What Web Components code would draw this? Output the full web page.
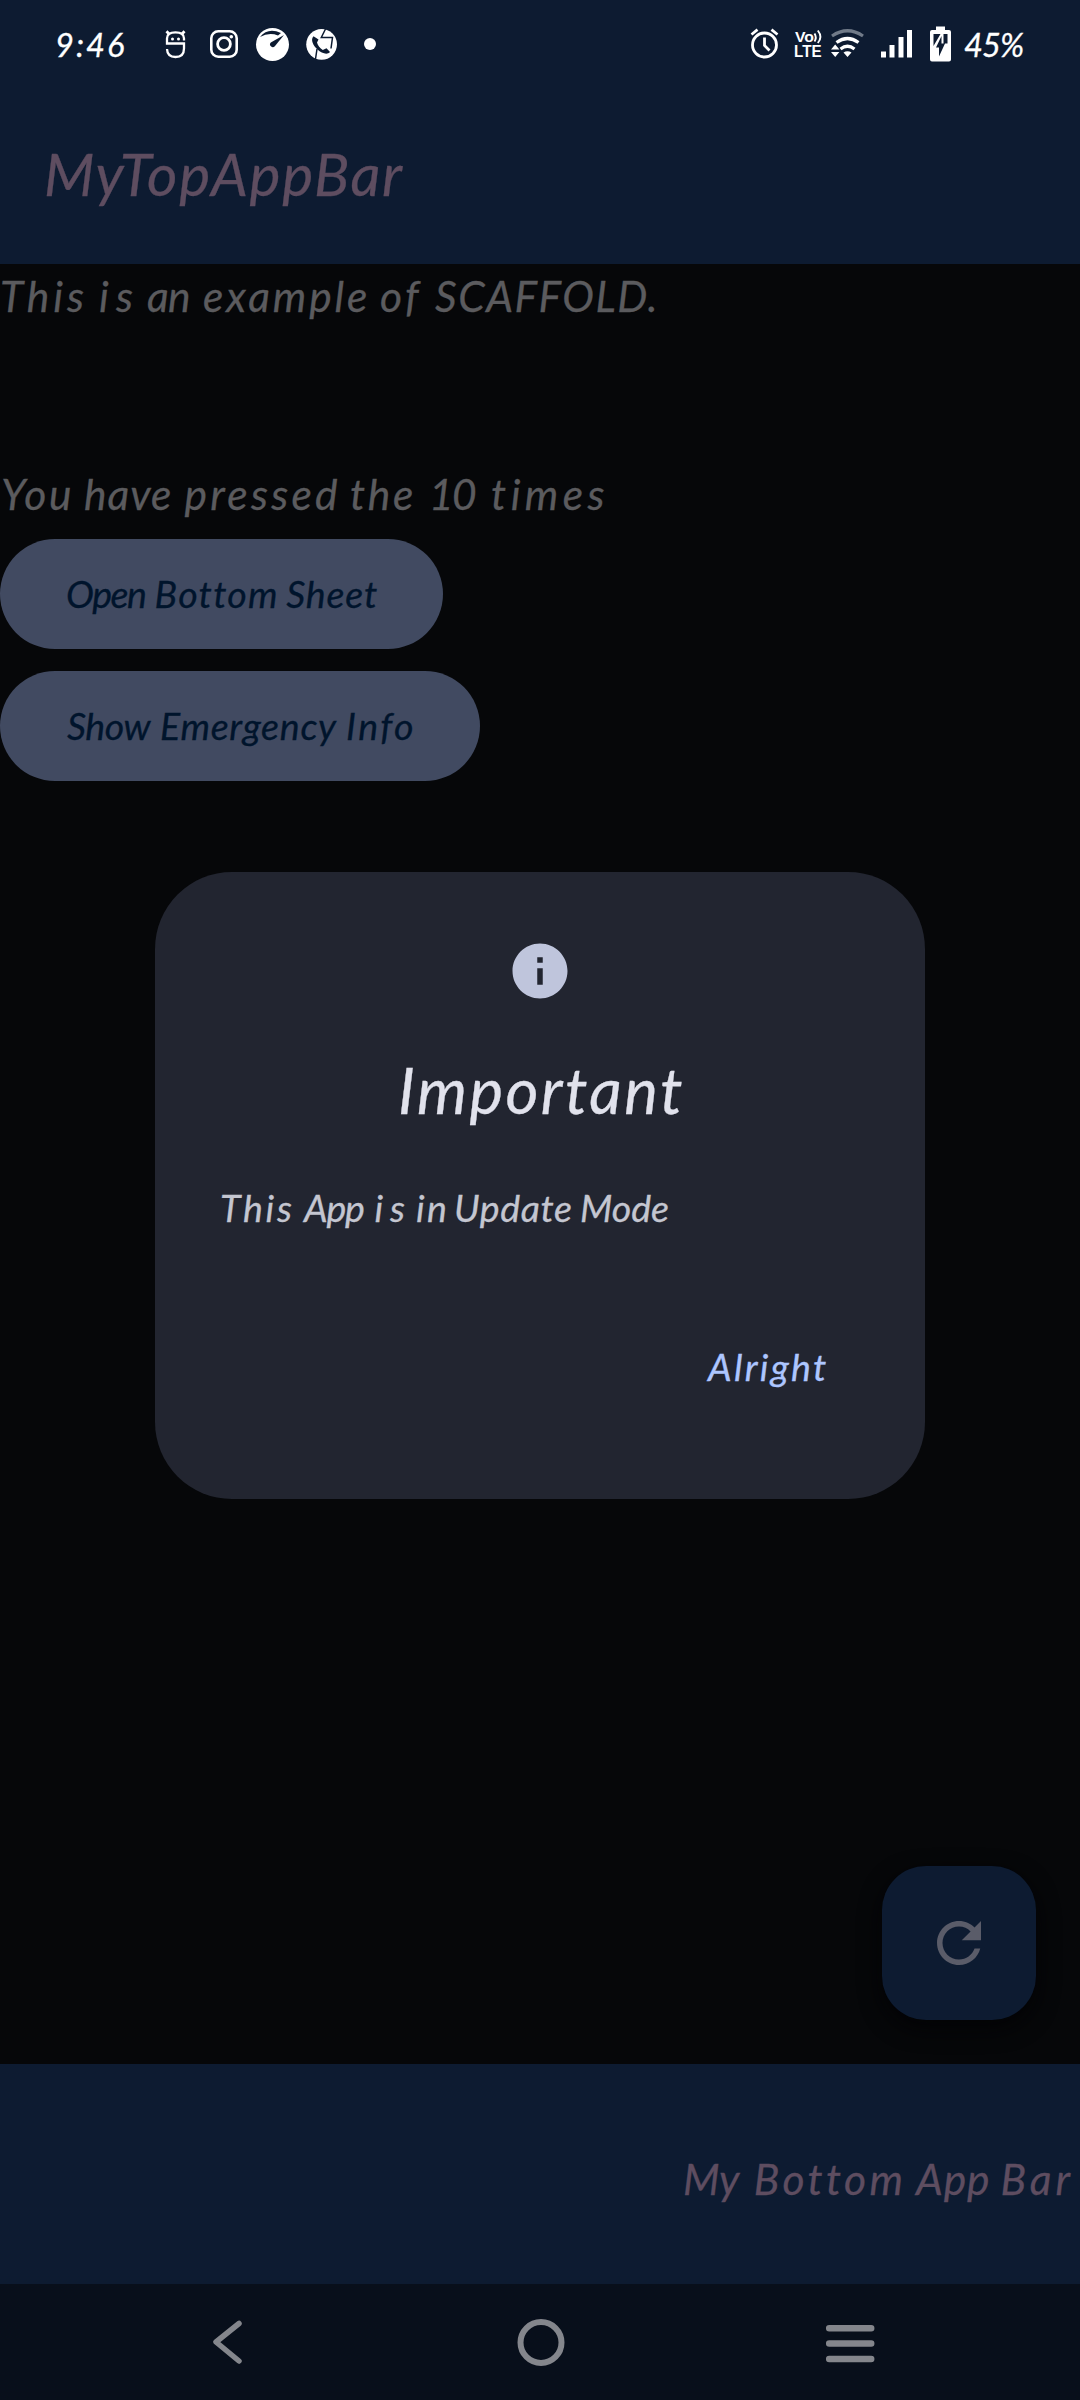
<!DOCTYPE html>
<html lang="en">
<head>
<meta charset="utf-8">
<title>Scaffold</title>
<style>
html,body{margin:0;padding:0;background:#060709}
body{font-family:Lato,"Open Sans",sans-serif;font-style:italic}
</style>
</head>
<body>
<phone-screen></phone-screen>
<script>
// One line of text. `words` lists the start-end pixels of each word's ink;
// letter spacing and word gaps are derived from the measured glyphs.
class FitLabel extends HTMLElement{
  connectedCallback(){
    if(this.shadowRoot)return;
    const words=this.textContent.trim().split(' '),size=+this.getAttribute('size');
    const spans=this.getAttribute('words').split(' ').map(p=>p.split('-').map(Number));
    const c=document.createElement('canvas').getContext('2d');
    c.font=`italic 400 ${size}px Lato`;
    const gap=c.measureText(' ').width,x0=spans[0][0],w=spans[spans.length-1][1]-x0;
    let pen=0;
    this.innerHTML=words.map((t,i)=>{
      const m=c.measureText(t),[s,e]=spans[i];
      const ls=t.length>1?(e-s-m.actualBoundingBoxLeft-m.actualBoundingBoxRight)/(t.length-1):0;
      const origin=s-x0+m.actualBoundingBoxLeft,ml=origin-pen-(i?gap:0);
      pen=origin+m.width+ls*t.length;
      return `<span style="margin-left:${ml.toFixed(2)}px;letter-spacing:${ls.toFixed(3)}px">${t}</span>`;
    }).join(' ');
    this.attachShadow({mode:'open'}).innerHTML=`<style>
      :host{display:block;flex:none;width:${w}px;height:${size*1.2}px;line-height:${size*1.2}px;font-size:${size}px;white-space:pre;font-variant-ligatures:none;-webkit-text-stroke:.3px currentColor}
    </style><slot></slot>`;
  }
}
customElements.define('fit-label',FitLabel);

const define=(name,html)=>{
  const t=document.createElement('template');t.innerHTML=html;
  customElements.define(name,class extends HTMLElement{
    constructor(){super();this.attachShadow({mode:'open'}).append(t.content.cloneNode(true));}
  });
};

define('status-bar',`<style>
:host{display:flex;height:84px;box-sizing:border-box;justify-content:space-between;padding:0 56px 0 57px;color:#fff;background:#0d1b31}
div{display:flex}
fit-label{margin-top:25px}
svg{display:block}
</style>
<div><fit-label size="32.5" words="0-67">9:46</fit-label>
<svg width="270" height="84" viewBox="124 0 270 84" fill="none" stroke="#fff">
  <path d="M184 40.500V38.500Q184 32.300 175.500 32.300T167 38.500V43.500H184V48.500Q184 57 175.500 57Q167.300 57 167 49" stroke-width="2.300"/>
  <path d="M166.500 31.300L169.500 34.500M184.500 31.300L181.500 34.500" stroke-width="2.800"/>
  <circle cx="172.500" cy="39" r="1.500" fill="#fff" stroke="none"/><circle cx="178.500" cy="39" r="1.500" fill="#fff" stroke="none"/>
  <rect x="211.300" y="31.300" width="25.400" height="25.400" rx="7" stroke-width="2.600"/>
  <circle cx="224" cy="44" r="6.400" stroke-width="2.800"/><circle cx="231.300" cy="36.800" r="1.800" fill="#fff" stroke="none"/>
  <circle cx="272.500" cy="44.500" r="16.500" fill="#fff" stroke="none"/>
  <path d="M260 37Q268 27 281 33L278 35.500Q269 32 260 37Z" fill="#0d1b31" stroke="none"/>
  <path d="M284 35L274.800 46.200A2.700 2.700 0 0 1 270.800 42.500Z" fill="#0d1b31" stroke="none"/>
  <circle cx="321.600" cy="44.300" r="15.400" fill="#fff" stroke="none"/>
  <path d="M325.500 29L321.300 37.500H332.500L331 48.500M317 49L315.500 59" stroke="#0d1b31" stroke-width="1.500"/>
  <path d="M313.500 36.200C310 39.500 313.500 46 317.500 49.500C321.500 53 327 55.500 330 52L326.500 48.200L322.800 50C320 48.500 317.800 45.500 317 42.500L318.500 39.500Z" fill="#0d1b31" stroke="none"/>
  <circle cx="370" cy="44" r="6" fill="#fff" stroke="none"/>
</svg></div>
<div><svg width="214" height="84" viewBox="750 0 214 84" fill="none" stroke="#fff">
  <circle cx="764.500" cy="45" r="12" stroke-width="2.800"/>
  <path d="M764.500 37.500V45.500L769.500 50.500M751.500 34.500L757.500 29.700M777.500 34.500L771.500 29.700" stroke-width="2.800"/>
  <g fill="#fff" stroke="none" font-family="Liberation Sans" font-weight="700" font-style="normal">
    <text x="795" y="42" font-size="14.500" textLength="19" lengthAdjust="spacingAndGlyphs">Vo</text>
    <text x="794" y="57.300" font-size="16" textLength="27.500" lengthAdjust="spacingAndGlyphs">LTE</text>
  </g>
  <path d="M814.500 33.500Q817 37.500 814.500 41.500M817.800 30.500Q823 37 817.800 43" stroke-width="1.900"/>
  <path d="M832 36Q847.500 25.500 863 36" stroke="#707a88" stroke-width="3.200"/>
  <path d="M836.500 42.500Q847.500 34.500 858.500 42.500M840.500 49Q847.500 43.500 854.500 49" stroke-width="3.200"/>
  <path d="M843.500 52.500Q847.500 50 851.500 52.500L847.500 57ZM831 49.500L835.200 44.500L839.400 49.500ZM831 52L835.200 57L839.400 52Z" fill="#fff" stroke="none"/>
  <path d="M881 51.500h5v6h-5zM889.500 45h5v12.500h-5zM898.500 37h5v20.500h-5zM907 30h5v27.500h-5z" fill="#fff" stroke="none"/>
  <path d="M936 26.500h9v3.500h4q2 0 2 2v27.500q0 2-2 2h-17q-2 0-2-2V32q0-2 2-2h4z" fill="#fff" stroke="none"/>
  <path d="M933.500 34H940.500L933.500 46ZM943.500 34H947.500V43.500H943.500ZM941.500 36V43.500H945L939 56.500V47.500H936Z" fill="#0d1b31" stroke="none"/>
</svg><fit-label size="32.5" words="0-60">45%</fit-label></div>`);

define('top-app-bar',`<style>
:host{display:block;height:180px;box-sizing:border-box;padding:53.500px 0 0 46px;background:#0d1b31;color:#5e4d60}
</style><fit-label size="58.5" words="46-403">MyTopAppBar</fit-label>`);

define('pill-button',`<style>
:host{display:flex;align-items:flex-start;box-sizing:border-box;width:fit-content;height:110px;border-radius:55px;padding:31.500px 68px 0 67px;background:#414a61;color:#00142c}
</style><slot></slot>`);

define('refresh-fab',`<style>
:host{display:flex;width:154px;height:154px;border-radius:44px;background:#0d1b31;align-items:center;justify-content:center;box-shadow:0 8px 22px #030305}
</style><svg width="66" height="66" viewBox="0 0 24 24" fill="#5a5c69"><path d="M17.650 6.350C16.200 4.900 14.210 4 12 4c-4.420 0-7.990 3.580-7.990 8s3.570 8 7.990 8c3.730 0 6.840-2.550 7.730-6h-2.080c-.82 2.330-3.040 4-5.650 4-3.310 0-6-2.690-6-6s2.690-6 6-6c1.660 0 3.140.69 4.220 1.780L13 11h7V4l-2.350 2.350z"/></svg>`);

define('bottom-app-bar',`<style>
:host{display:flex;justify-content:flex-end;height:220px;box-sizing:border-box;padding:89px 11px 0 0;background:#0d1b31;color:#5e4d60}
</style><fit-label size="42.5" words="685-741 755.7-899 911.7-985.7 1000-1069">My Bottom App Bar</fit-label>`);

define('system-nav',`<style>
:host{display:flex;height:116px;box-sizing:border-box;padding:31px 202px 0 209px;background:#080f1b}
svg{display:block}
</style>
<svg width="40" height="56" viewBox="209 2315 40 56" fill="none" stroke="#84868c" stroke-width="5.500" stroke-linecap="round" stroke-linejoin="round"><path d="M239 2323.500L216 2342L239 2361"/></svg>
<svg style="margin:0 auto 0 263.500px" width="56" height="56" viewBox="512.500 2315 56 56" fill="none" stroke="#84868c" stroke-width="6"><circle cx="540.500" cy="2342.500" r="20.500"/></svg>
<svg width="56" height="56" viewBox="822 2315 56 56" stroke="#84868c" stroke-width="6.500" stroke-linecap="round"><path d="M829.200 2328.200H871.200M829.200 2343.500H871.200M829.200 2359H871.200"/></svg>`);

define('alert-dialog',`<style>
:host{display:flex;flex-direction:column;box-sizing:border-box;width:770px;height:627px;border-radius:77px;background:#222530;padding:66px 99px 0 67px}
svg{display:block;margin-left:285px}
.title{margin:48px 0 0 179px;color:#e1e2ec}
.body{margin-top:56.500px;color:#c4c6d0}
.ok{align-self:flex-end;margin-top:114.500px;color:#adc6ff}
</style>
<svg width="66" height="66" viewBox="0 0 24 24" fill="#bfc5dc"><path d="M12 2C6.480 2 2 6.480 2 12s4.480 10 10 10 10-4.480 10-10S17.520 2 12 2zm1 15h-2v-6h2v6zm0-8h-2V7h2v2z"/></svg>
<fit-label class="title" size="63.5" words="401-682">Important</fit-label>
<fit-label class="body" size="37.5" words="222-292 302-364 375.5-405 417-445 456-571 581-668">This App is in Update Mode</fit-label>
<fit-label class="ok" size="37.5" words="706-826">Alright</fit-label>`);

define('phone-screen',`<style>
:host{display:flex;flex-direction:column;position:relative;width:1080px;height:2400px;background:#060709;overflow:hidden}
main{flex:1;display:flex;flex-direction:column;align-items:flex-start;color:#5b5b5e}
.a{margin:5.500px 0 0 2px}
.b{margin:147px 0 0 3px}
pill-button{margin-top:20.500px}
pill-button+pill-button{margin-top:22px}
refresh-fab{margin:auto 44px 44px auto}
.overlay{position:absolute;top:86px;right:0;bottom:115px;left:0;display:flex;align-items:center;justify-content:center}
</style>
<status-bar></status-bar>
<top-app-bar></top-app-bar>
<main>
  <fit-label class="a" size="42.5" words="2-84 100-133 148-189 204-366 381-421 435-654.5">This is an example of SCAFFOLD.</fit-label>
  <fit-label class="b" size="42.5" words="2-69 84-169 183.5-336 350-411 432-475 491-603">You have pressed the 10 times</fit-label>
  <pill-button><fit-label size="37.5" words="67-145 155.5-274 284-375">Open Bottom Sheet</fit-label></pill-button>
  <pill-button><fit-label size="37.5" words="67-151.5 161-337 347-412">Show Emergency Info</fit-label></pill-button>
  <refresh-fab></refresh-fab>
</main>
<bottom-app-bar></bottom-app-bar>
<system-nav></system-nav>
<div class="overlay"><alert-dialog></alert-dialog></div>`);
</script>
</body>
</html>
